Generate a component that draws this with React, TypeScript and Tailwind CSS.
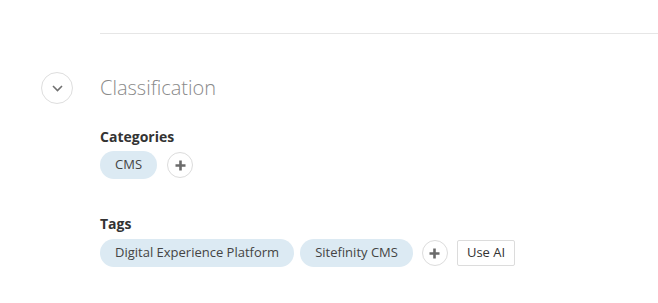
import React from 'react';

function Chip({ label, className = '' }: { label: string; className?: string }) {
  return (
    <span
      className={`flex h-[28px] items-center rounded-full bg-[#dceaf3] px-[15px] text-[13px] text-[#444] ${className}`}
    >
      {label}
    </span>
  );
}

function AddButton({ className = '' }: { className?: string }) {
  return (
    <button
      aria-label="Add"
      className={`flex h-[26px] w-[26px] items-center justify-center rounded-full border border-[#dcdcdc] bg-white ${className}`}
    >
      <svg width="11" height="11" viewBox="0 0 11 11">
        <path d="M5.5 0.5v10M0.5 5.5h10" stroke="#6b6b6b" strokeWidth="2.6" />
      </svg>
    </button>
  );
}

export default function App() {
  return (
    <div className="flex min-h-screen w-full flex-col bg-white pl-[41px] pt-[33px] font-['Open_Sans',sans-serif]">
      <div className="ml-[59px] h-px bg-[#e6e6e6]" />

      <div className="mt-[38px] flex items-center gap-[27px]">
        <button
          aria-label="Collapse"
          className="flex h-[32px] w-[32px] items-center justify-center rounded-full border border-[#dedede] bg-white"
        >
          <svg width="11" height="7" viewBox="0 0 11 7">
            <path d="M1 1l4.5 4.5L10 1" fill="none" stroke="#707070" strokeWidth="1.6" />
          </svg>
        </button>
        <h2 className="text-[20px] font-light leading-[28px] text-[#8a8a8a]">Classification</h2>
      </div>

      <div className="pl-[59px]">
        <h3 className="mt-[23px] text-[14px] font-bold leading-[20px] text-[#333]">Categories</h3>
        <div className="mt-[4px] flex items-center">
          <Chip label="CMS" />
          <AddButton className="ml-[10px]" />
        </div>

        <h3 className="mt-[35px] text-[14px] font-bold leading-[20px] text-[#333]">Tags</h3>
        <div className="mt-[5px] flex items-center">
          <Chip label="Digital Experience Platform" />
          <Chip label="Sitefinity CMS" className="ml-[6px]" />
          <AddButton className="ml-[9px]" />
          <button className="ml-[9px] flex h-[26px] items-center rounded-[2px] border border-[#dcdcdc] bg-white px-[9px] text-[13px] text-[#333]">
            Use AI
          </button>
        </div>
      </div>
    </div>
  );
}
